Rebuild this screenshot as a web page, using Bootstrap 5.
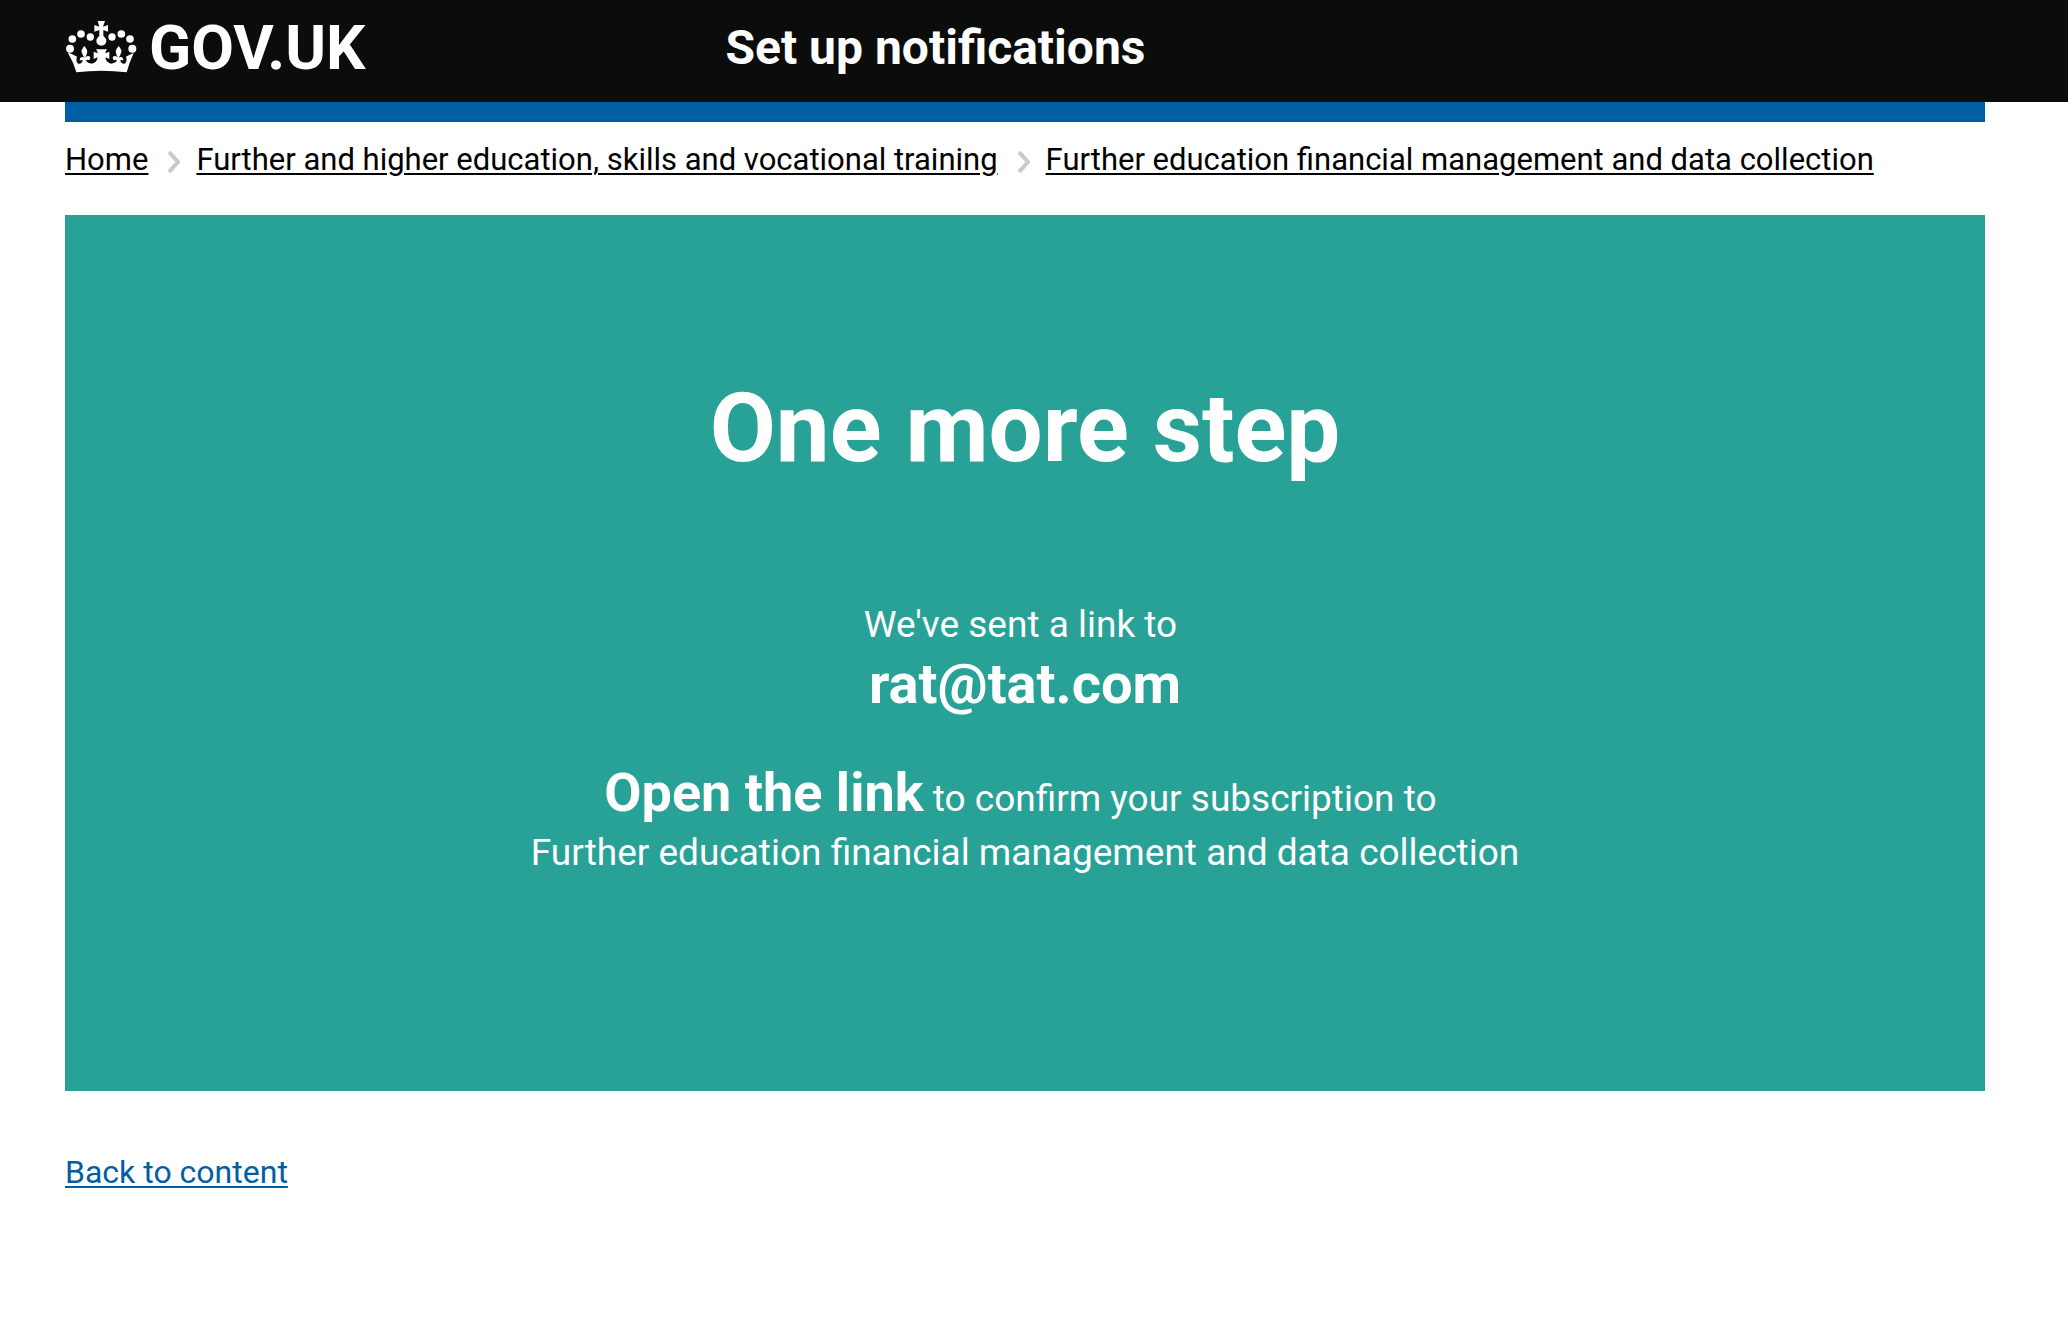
<!DOCTYPE html>
<html lang="en">
<head>
<meta charset="utf-8">
<meta name="viewport" content="width=device-width, initial-scale=1">
<title>Set up notifications - GOV.UK</title>
<link href="https://cdn.jsdelivr.net/npm/bootstrap@5.3.0/dist/css/bootstrap.min.css" rel="stylesheet">
<style>
body{font-family:Roboto,"Liberation Sans",sans-serif;font-size:32px;line-height:40px;color:#0b0c0c;background:#fff}
.page-gutter{padding-left:65px;padding-right:83px}
.site-header{background:#0b0c0c;color:#fff;min-height:102px;padding-bottom:6px}
.brand-col{width:34.4%}
.brand-link{color:#fff;font-weight:700;font-size:62px;line-height:74px;gap:12px}
.brand-link:hover{color:#fff}
.brand-link svg{width:72px;height:54px;margin-bottom:2px}
.service-name{font-size:48px;line-height:60px;font-weight:700}
.accent-bar{height:20px;background:#005ea5}
.trail{padding-top:18px;padding-bottom:35px;font-size:31px}
.trail svg{width:12px;height:22px;margin:4px 16px 0 20px}
a{text-decoration-thickness:2px;text-underline-offset:3px}
.trail a{color:#000}
.confirm-panel{background:#28a197;color:#fff;min-height:876px;padding-top:157px;font-size:37px;line-height:54px}
.confirm-panel h1{font-size:96px;line-height:112px;font-weight:700;margin-bottom:114px}
.confirm-panel strong{font-size:54px}
.confirm-panel .sent-address{font-size:56px;line-height:64px}
.sent-note{margin-bottom:50px}
.back-link{color:#005ea5}
.back-row{padding-top:61px}
</style>
</head>
<body>
<header class="site-header page-gutter d-flex align-items-center">
  <div class="brand-col">
    <a class="brand-link d-inline-flex align-items-center text-decoration-none" href="#">
      <svg viewBox="14 14 216 160" fill="#fff" aria-hidden="true">
        <circle cx="36" cy="70" r="11.500"/><circle cx="62" cy="55" r="11.500"/><circle cx="90" cy="64" r="11"/>
        <circle cx="155" cy="64" r="11"/><circle cx="183" cy="55" r="11.500"/><circle cx="209" cy="70" r="11.500"/>
        <circle cx="29" cy="99" r="12"/><circle cx="216" cy="99" r="12"/>
        <path d="M112 16h22l-6 17 15-5v20l-14-5v17q9 8 9 17-2 13-15 13t-15-13q0-9 9-17V43l-15 5V28l15 5z"/>
        <path d="M27 112q12 5 23 11-5 14 4 21 12 1 13-10-5-3-9 1 0-12 9-11l5 2q-6-8-9-20 3-9 9-15 7 8 9 16-1 11-7 19 6-7 13-4 6 6-1 12-4-3-9 0 5 10 18 10 15-3 17-19l-12 5v-22l12 5q0-6-5-12h33q-5 6-5 12l12-5v22l-12-5q2 16 17 19 13 0 18-10-5-3-9 0-7-6-1-12 7-3 13 4-6-8-7-19 2-8 9-16 6 6 9 15-3 12-9 20l5-2q9-1 9 11-4-4-9-1 1 11 13 10 9-7 4-21 11-6 23-11-13 29-21 58-75-9-151 0-8-29-25-58z"/>
      </svg>
      <span>GOV.UK</span>
    </a>
  </div>
  <div class="service-name">Set up notifications</div>
</header>
<div class="page-gutter">
  <div class="accent-bar"></div>
  <nav class="trail" aria-label="Breadcrumb">
    <ol class="list-unstyled d-flex flex-wrap mb-0">
      <li><a href="#">Home</a></li>
      <li class="d-flex align-items-center"><svg viewBox="0 0 12 22" fill="none" stroke="#c8cacb" stroke-width="4" aria-hidden="true"><path d="M1 1l9 10-9 10"/></svg><a href="#">Further and higher education, skills and vocational training</a></li>
      <li class="d-flex align-items-center"><svg viewBox="0 0 12 22" fill="none" stroke="#c8cacb" stroke-width="4" aria-hidden="true"><path d="M1 1l9 10-9 10"/></svg><a href="#">Further education financial management and data collection</a></li>
    </ol>
  </nav>
  <main>
    <section class="confirm-panel text-center">
      <h1>One more step</h1>
      <p class="sent-note">We've sent a link to&nbsp;<strong class="sent-address d-block">rat@tat.com</strong></p>
      <p><strong>Open the link</strong> to confirm your subscription to&nbsp;<br>Further education financial management and data collection</p>
    </section>
    <div class="back-row"><a class="back-link" href="#">Back to content</a></div>
  </main>
</div>
<script src="https://cdn.jsdelivr.net/npm/bootstrap@5.3.0/dist/js/bootstrap.bundle.min.js"></script>
</body>
</html>
